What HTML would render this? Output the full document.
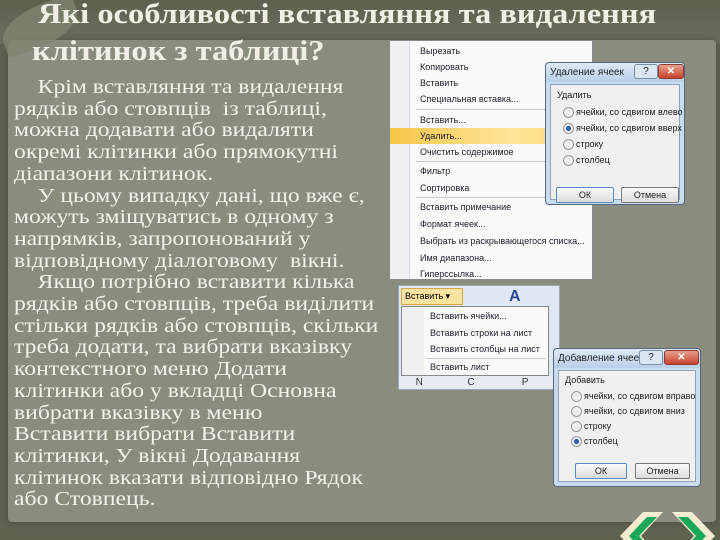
<!DOCTYPE html>
<html><head><meta charset="utf-8"><style>
*{margin:0;padding:0;box-sizing:border-box}
body{width:720px;height:540px;overflow:hidden;background:#5f624f;position:relative;font-family:"Liberation Sans",sans-serif}
.paper{position:absolute;left:8px;top:40px;width:708px;height:482px;background:#8a8c7d;border-radius:4px;box-shadow:0 0 8px #4a4c3c}
.top{position:absolute;left:0;top:0;width:720px;height:44px;background:linear-gradient(#5d604d,#6c6f5d)}
.leaf{position:absolute;left:0;top:6px;width:80px;height:40px;background:#7f8470;border-radius:60% 0 60% 0;transform:rotate(-20deg);opacity:.8}
.t{position:absolute;font-family:"Liberation Serif",serif;font-weight:bold;color:#f2f0e6;font-size:28px;white-space:nowrap;transform:scaleX(1.16);transform-origin:left top}
.body{position:absolute;left:14px;top:77px;width:330px;font-family:"Liberation Serif",serif;font-size:20.5px;line-height:21.7px;color:#f4f2ea;white-space:nowrap;transform:scaleX(1.155);transform-origin:left top}
.menu{position:absolute;left:389px;top:40px;width:204px;height:240px;background:#fafafa;border:1px solid #8a8a8a;font-size:9px;color:#223;white-space:nowrap;overflow:hidden}
.menu .ic{position:absolute;left:0;top:0;width:20px;height:100%;background:#eef0f2;border-right:1px solid #dde}
.mi{position:absolute;left:22px;height:16px;line-height:16px;width:180px;padding-left:8px}
.sep{position:absolute;left:26px;width:175px;height:1px;background:#c8c8c8}
.dlg{position:absolute;background:#c9dbef;border:1px solid #55687f;border-radius:4px;font-size:9px;color:#222;white-space:nowrap;overflow:hidden}
.tb{position:absolute;left:0;top:0;right:0;height:19px;background:linear-gradient(#dfeaf7,#b9cfe8);padding:4px 0 0 4px;font-size:10px}
.q{position:absolute;top:1px;width:24px;height:15px;border:1px solid #7a8ca4;border-radius:3px;background:#dbe6f3;text-align:center;font-size:10px;line-height:13px}
.x{position:absolute;top:1px;width:44px;height:15px;border:1px solid #8a3a30;border-radius:3px;background:linear-gradient(#e9a090,#c7412c);color:#fff;text-align:center;font-size:10px;line-height:13px;font-weight:bold}
.in{position:absolute;left:4px;right:4px;top:21px;bottom:4px;background:#f0f0f0;border:1px solid #8ea2ba}
.r{position:absolute;left:12px;height:14px;line-height:14px;padding-left:13px}
.r:before{content:"";position:absolute;left:0;top:2px;width:9px;height:9px;border:1px solid #999;border-radius:50%;background:#eee}
.r.on:before{background:radial-gradient(#2a5ea8 35%,#eee 45%)}
.btn{position:absolute;height:16px;border:1px solid #777;border-radius:2px;background:linear-gradient(#fafafa,#dcdcdc);text-align:center;line-height:14px}
</style></head><body>
<div class="top"></div>
<div class="paper"></div>
<div class="leaf"></div>
<div class="t" style="left:38px;top:-1px">Які особливості вставляння та видалення</div>
<div class="t" style="left:32px;top:36px">клітинок з таблиці?</div>
<div class="body">&nbsp;&nbsp;&nbsp;&nbsp;Крім вставляння та видалення<br>рядків або стовпців&nbsp; із таблиці,<br>можна додавати або видаляти<br>окремі клітинки або прямокутні<br>діапазони клітинок.<br>&nbsp;&nbsp;&nbsp;&nbsp;У цьому випадку дані, що вже є,<br>можуть зміщуватись в одному з<br>напрямків, запропонований у<br>відповідному діалоговому&nbsp; вікні.<br>&nbsp;&nbsp;&nbsp;&nbsp;Якщо потрібно вставити кілька<br>рядків або стовпців, треба виділити<br>стільки рядків або стовпців, скільки<br>треба додати, та вибрати вказівку<br>контекстного меню Додати<br>клітинки або у вкладці Основна<br>вибрати вказівку в меню<br>Вставити вибрати Вставити<br>клітинки, У вікні Додавання<br>клітинок вказати відповідно Рядок<br>або Стовпець.</div>

<div class="menu"><div class="ic"></div>
<div class="mi" style="top:2px">Вырезать</div>
<div class="mi" style="top:18px">Копировать</div>
<div class="mi" style="top:34px">Вставить</div>
<div class="mi" style="top:50px">Специальная вставка...</div>
<div class="sep" style="top:68px"></div>
<div class="mi" style="top:71px">Вставить...</div>
<div class="mi" style="top:87px;left:0;width:202px;padding-left:30px;background:linear-gradient(90deg,#f6c64a,#ffe59a 60%,#fdd96f)">Удалить...</div>
<div class="mi" style="top:103px">Очистить содержимое</div>
<div class="sep" style="top:120px"></div>
<div class="mi" style="top:122px">Фильтр</div>
<div class="mi" style="top:139px">Сортировка</div>
<div class="sep" style="top:156px"></div>
<div class="mi" style="top:158px">Вставить примечание</div>
<div class="mi" style="top:175px">Формат ячеек...</div>
<div class="mi" style="top:192px">Выбрать из раскрывающегося списка...</div>
<div class="mi" style="top:209px">Имя диапазона...</div>
<div class="mi" style="top:225px">Гиперссылка...</div>
</div>

<div class="dlg" style="left:545px;top:62px;width:140px;height:143px">
<div class="tb">Удаление ячеек</div><div class="q" style="left:88px">?</div><div class="x" style="left:112px;width:26px">✕</div>
<div class="in">
<div style="position:absolute;left:6px;top:5px">Удалить</div>
<div class="r" style="top:20px">ячейки, со сдвигом влево</div>
<div class="r on" style="top:36px">ячейки, со сдвигом вверх</div>
<div class="r" style="top:52px">строку</div>
<div class="r" style="top:68px">столбец</div>
<div class="btn" style="left:5px;top:102px;width:58px;border-color:#5a8ac0">ОК</div>
<div class="btn" style="left:70px;top:102px;width:58px">Отмена</div>
</div></div>

<div style="position:absolute;left:398px;top:285px;width:162px;height:105px;background:#dfe8f4;border:1px solid #9aaabb;white-space:nowrap;overflow:hidden">
<div style="position:absolute;left:2px;top:2px;width:62px;height:17px;background:#fde4a0;border:1px solid #d9a84a;font-size:9px;padding-left:3px;line-height:15px">Вставить ▾</div>
<div style="position:absolute;left:110px;top:2px;font-size:16px;color:#2a4a90;font-weight:bold">A</div>
<div style="position:absolute;left:0;top:90px;width:160px;height:14px;background:#e7ecf3;font-size:10px;color:#333;line-height:14px">&nbsp;&nbsp;&nbsp;&nbsp;&nbsp;&nbsp;N&nbsp;&nbsp;&nbsp;&nbsp;&nbsp;&nbsp;&nbsp;&nbsp;&nbsp;&nbsp;&nbsp;&nbsp;&nbsp;&nbsp;&nbsp;&nbsp;C&nbsp;&nbsp;&nbsp;&nbsp;&nbsp;&nbsp;&nbsp;&nbsp;&nbsp;&nbsp;&nbsp;&nbsp;&nbsp;&nbsp;&nbsp;&nbsp;&nbsp;P</div>
<div style="position:absolute;left:2px;top:20px;width:148px;height:70px;background:#fafafa;border:1px solid #888;font-size:9px;color:#223">
<div style="position:absolute;left:0;top:0;width:22px;height:100%;background:#eef0f2"></div>
<div style="position:absolute;left:28px;top:4px">Вставить ячейки...</div>
<div style="position:absolute;left:28px;top:21px">Вставить строки на лист</div>
<div style="position:absolute;left:28px;top:37px">Вставить столбцы на лист</div>
<div style="position:absolute;left:24px;top:51px;width:120px;height:1px;background:#ccc"></div>
<div style="position:absolute;left:28px;top:55px">Вставить лист</div>
</div></div>

<div class="dlg" style="left:553px;top:348px;width:148px;height:139px">
<div class="tb">Добавление ячеек</div><div class="q" style="left:85px">?</div><div class="x" style="left:110px;width:35px">✕</div>
<div class="in">
<div style="position:absolute;left:6px;top:4px">Добавить</div>
<div class="r" style="top:18px">ячейки, со сдвигом вправо</div>
<div class="r" style="top:33px">ячейки, со сдвигом вниз</div>
<div class="r" style="top:48px">строку</div>
<div class="r on" style="top:63px">столбец</div>
<div class="btn" style="left:16px;top:92px;width:52px;border-color:#5a8ac0">ОК</div>
<div class="btn" style="left:76px;top:92px;width:55px">Отмена</div>
</div></div>

<svg style="position:absolute;left:615px;top:508px" width="105" height="32">
<polygon points="5,28 28,4 48,4 26,28 48,52 28,52" fill="#f3ecd0"/>
<polygon points="14,28 32,9 42,9 24,28 42,47 32,47" fill="#19a85a"/>
<polygon points="100,28 77,4 57,4 79,28 57,52 77,52" fill="#f3ecd0"/>
<polygon points="91,28 73,9 63,9 81,28 63,47 73,47" fill="#19a85a"/>
</svg>
</body></html>
